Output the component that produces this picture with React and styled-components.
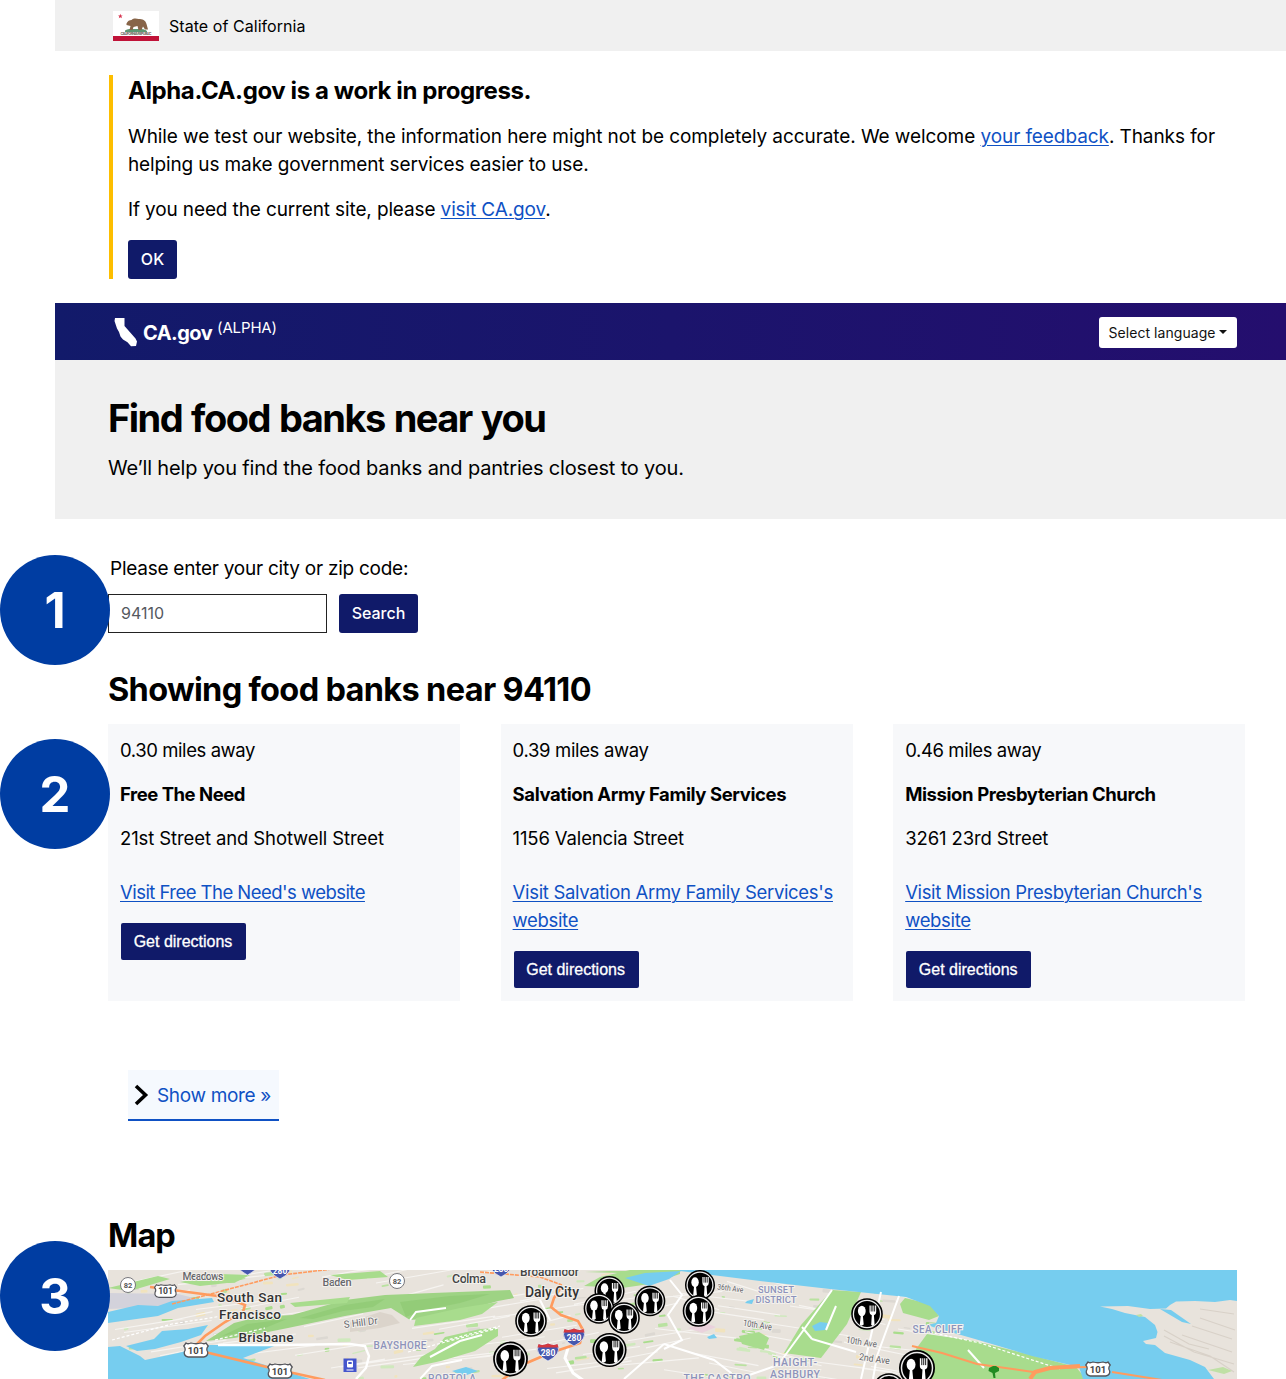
import React from "react";
import styled, { createGlobalStyle } from "styled-components";

const Global = createGlobalStyle`
  * { box-sizing: border-box; }
  body { margin: 0; background: #fff; color: #000; font-family: Inter, "Liberation Sans", sans-serif; }
  #root { overflow: hidden; height: 1379px; }
  h1, h2, h3, p { margin: 0; }
`;

const Page = styled.div`position: relative; width: 1286px;`;
const Site = styled.div`margin-left: 55px;`;
const Span = styled.span`
  letter-spacing: ${(p) => p.$ls || 0}px; word-spacing: ${(p) => p.$ws || 0}px; white-space: nowrap;
`;
const T = ({ ls, ws, children }) => <Span $ls={ls} $ws={ws}>{children}</Span>;

const StateBar = styled.div`
  display: flex; align-items: center; gap: 10px; height: 51px; padding-left: 58px;
  background: #f0f0f0; font-size: 16px; line-height: 18px;
`;
const Link = styled.a`color: #0f51c4; text-decoration: underline; text-underline-offset: 2px; text-decoration-thickness: 1px;`;
const Notice = styled.section`
  margin: 24px 0 24px 54px; height: 204px; padding-left: 15px; border-left: 4px solid #fdbe00;
  font-size: 19px; line-height: 28px;
`;
const NoticeTitle = styled.h3`font-size: 24px; line-height: 32px; margin-bottom: 16px;`;
const NoticeText = styled.p`margin-bottom: ${(p) => p.$gap}px;`;
const Button = styled.button`
  display: inline-flex; align-items: center; justify-content: center;
  width: ${(p) => p.$w}px; height: 39px; padding: 0 0 1px; border: 0; border-radius: 3px;
  background: #101a69; color: #fff; font: 500 16px Inter, sans-serif;
`;
const Directions = styled.button`
  display: flex; align-items: center; justify-content: center; width: 125px; height: 37px; margin-left: 1px;
  padding: 0 1px 0 0; border: 0; border-radius: 2px; background: #101a69; color: #fff;
  font: 400 16px "Liberation Sans", sans-serif; -webkit-text-stroke: 0.3px #fff;
`;
const Header = styled.header`
  display: flex; align-items: center; justify-content: space-between; height: 57px; padding: 0 49px 0 59px;
  background: linear-gradient(90deg, #121a6a, #240e6e);
`;
const Brand = styled.div`display: flex; align-items: center; color: #fff; font-size: 20px; font-weight: 700;`;
const BrandName = styled.span`margin: 2px 5px 0 5px;`;
const Alpha = styled.span`font-size: 15px; font-weight: 400; margin-top: -9px;`;
const Language = styled.button`
  display: flex; align-items: center; justify-content: center; gap: 4px; width: 138px; height: 31px;
  margin-top: 1px; border: 0; border-radius: 3px; padding: 0; background: #fff; color: #111; font: 400 14px Inter, sans-serif;
`;
const Caret = styled.i`border: 4px solid transparent; border-top-color: #111; border-bottom: 0;`;
const Hero = styled.section`height: 159px; padding: 34px 0 0 53px; background: #f0f0f0;`;
const Title = styled.h1`font-size: 38px; line-height: 48px;`;
const Lead = styled.p`font-size: 20px; line-height: 28px; margin-top: 12px;`;
const Main = styled.main`padding-left: 53px;`;
const Label = styled.label`display: block; padding: 36px 0 0 2px; font-size: 19px; line-height: 28px;`;
const Form = styled.div`display: flex; gap: 12px; margin-top: 11px;`;
const Field = styled.div`
  display: flex; align-items: center; width: 219px; height: 39px; border: 1px solid #222; padding: 0 0 1px 12px;
  color: #55595f; font-size: 16px;
`;
const Heading = styled.h2`font-size: 32.5px; line-height: 40px; margin-top: ${(p) => p.$top}px;`;
const Cards = styled.div`display: grid; grid-template-columns: repeat(3, 352.3px); gap: 40.3px; margin-top: 14px;`;
const Card = styled.article`height: 277px; padding: 12px; background: #f7f8fa; font-size: 18.5px; line-height: 28px;`;
const Line = styled.p`
  margin-bottom: ${(p) => p.$gap || 16}px; font-weight: ${(p) => (p.$bold ? 700 : 400)};
`;
const ShowMore = styled.div`
  display: flex; align-items: center; gap: 8px; width: 151px; height: 51px; margin: 69px 0 0 20px; padding: 1px 0 0 6px;
  background: #f5f9fe; border-bottom: 2px solid #0f51c4; color: #0f51c4; font-size: 19px;
`;
const MapBox = styled.div`width: 1129px; height: 109px; margin-top: 14px; overflow: hidden; svg { display: block; }`;
const Badge = styled.div`
  position: absolute; left: 0; top: ${(p) => p.$top}px; width: 110px; height: 110px; border-radius: 50%;
  display: flex; align-items: center; justify-content: center; background: #003da2; color: #fff;
  font: 700 49px Inter, sans-serif;
`;

const Flag = () => (
  <svg width="46" height="30" viewBox="0 0 46 30">
    <rect width="46" height="30" fill="#fff" />
    <rect y="25" width="46" height="5" fill="#c01238" />
    <path d="M7.300 2.800l.7 1.600 1.700.1-1.300 1.100.5 1.700-1.600-1-1.500 1 .5-1.700L5 4.500l1.700-.1z" fill="#d6334f" />
    <path d="M12 19.500c3-2 6-1.600 10-1.500 5 0 9-.5 12 1.900v1H12z" fill="#5d9773" />
    <path d="M13.500 12.500c1-2.500 3-3.500 5-3.500 2-2 5-1.500 7-1 4 0 7 1 8 5l1.500 5.500h-3l-2-3-1.500 3.500h-3l-1-4-4 1-1 3h-3l1-4-4-1z" fill="#876448" />
    <text x="23" y="23.800" textAnchor="middle" fontSize="3.600" fontWeight="700" fill="#6b6258" textLength="31" fontFamily="Inter">CALIFORNIA REPUBLIC</text>
  </svg>
);

const California = () => (
  <svg width="24" height="30" viewBox="0 0 24 30">
    <path d="M1 1h9.500v8L21.500 21.500l1.500 3-1 4.500-5 .2-3.500-4L9 22.500 6.500 19.500 5 15 3 11.500 1.500 7 .5 4z" fill="#fff" />
  </svg>
);

const SPOTS = [[531, 1321, 1], [510.500, 1359, 1.100], [609.500, 1291, .95], [599, 1308.500, .97], [650, 1301, .97], [624, 1318, 1], [609.500, 1350, 1.080], [700, 1285, .95], [698.500, 1311, 1], [867, 1314, 1], [889, 1389, 1], [917, 1368, 1.140]];
const Spot = ({ x, y, s }) => (
  <g transform={`translate(${x} ${y}) scale(${s})`}>
    <circle r="15.800" fill="#000" />
    <circle r="13.600" fill="#000" stroke="#ececec" strokeWidth="1.300" />
    <ellipse cx="-5.200" cy="-3" rx="3.900" ry="5.200" fill="#fff" />
    <path d="M-6.200 1h2l.9 9.500-2 1.300-1.900-1z" fill="#fff" />
    <path d="M2.500-8.500v6.500q0 2.800 2.300 3.300L4.200 11l1.700 1 1.700-1.500L6.900 1.300Q9.200.8 9.200-2v-6.500" fill="#fff" />
    <path d="M4.200-9.500v7M5.900-9.500v7M7.600-9.500v7" stroke="#000" strokeWidth=".8" />
  </g>
);

const Shield101 = ({ x, y, s = 1 }) => (
  <g transform={`translate(${x} ${y}) scale(${s})`}>
    <path d="M-10-7q2 1.500 5 0 5 1.500 10 0 3 1.500 5 0l2.200 3q-2.500 3-.5 6 .6 4-4 5H-7.700q-4.600-1-4-5 2-3-.5-6z" fill="#fff" stroke="#55555b" strokeWidth="1.300" />
    <text y="3.600" textAnchor="middle" fontSize="9.500" fontWeight="700" fill="#444">101</text>
  </g>
);
const Shield280 = ({ x, y }) => (
  <g transform={`translate(${x} ${y})`}>
    <path d="M-9-8q4 2 9-.5 5 2.500 9 .5 3 6 0 10Q6 6 0 9-6 6-9 2-12-2-9-8z" fill="#4657ae" stroke="#fff" strokeWidth=".6" />
    <path d="M-9.500-8q4.500 2 9.500-.5 5 2.500 9.500.5l1 3.500h-21z" fill="#d4393f" />
    <text y="4" textAnchor="middle" fontSize="8.500" fontWeight="700" fill="#fff">280</text>
  </g>
);
const Route82 = ({ x, y }) => (
  <g transform={`translate(${x} ${y})`}>
    <circle r="7.500" fill="#fff" stroke="#77777c" />
    <text y="2.700" textAnchor="middle" fontSize="7.500" fontWeight="700" fill="#555">82</text>
  </g>
);

let seed = 17;
const rnd = () => ((seed = (seed * 16807) % 2147483647) / 2147483647);
const SPECKS = Array.from({ length: 230 }, () => ({
  x: 108 + rnd() * 830, y: 1270 + rnd() * 109, w: 3 + rnd() * 11, h: 1.200 + rnd() * 2.800,
  c: ["#b9e2a0", "#a9dd8c", "#dcd8d2", "#f1e3bd", "#cfe9bd"][Math.floor(rnd() * 5)], a: -14 + rnd() * 14,
}));
const STREETS = Array.from({ length: 95 }, (_, i) => {
  const x = 115 + i * 9, y = 1270 + rnd() * 105;
  return `M${x} ${y}l${40 + rnd() * 50} ${i < 60 ? -14 + rnd() * 6 : 8 + rnd() * 6}`;
}).join("");

const LABELS = [
  ["Meadows", 203, 1280, 41, 10.500, "#66666b", 500], ["Baden", 337, 1286, 29, 11, "#66666b", 500],
  ["South San", 249.500, 1302, 65, 13.500, "#333", 500], ["Francisco", 250, 1318.500, 62, 13.500, "#333", 500],
  ["Brisbane", 266, 1341.500, 55, 13.500, "#333", 500], ["Colma", 469, 1283, 34, 12.500, "#444", 500],
  ["Broadmoor", 549.500, 1276, 59, 12, "#444", 500], ["Daly City", 552, 1297, 54, 14, "#333", 500],
];
const AREAS = [
  ["BAYSHORE", 400, 1349, 53, 10], ["PORTOLA", 452, 1382, 48, 10], ["SUNSET", 776, 1293, 36, 9.500],
  ["DISTRICT", 776, 1303, 41, 9.500], ["SEA CLIFF", 937.500, 1333, 50, 10], ["HAIGHT-", 795, 1366, 44, 10.500],
  ["ASHBURY", 795, 1378, 50, 10.500], ["THE CASTRO", 717, 1382, 67, 10.500],
];
const AVENUES = [["S Hill Dr", 361, 1326, 34, -7, 10], ["36th Ave", 730, 1291, 26, 7, 8], ["10th Ave", 757, 1328, 29, 9, 9], ["10th Ave", 861, 1345, 31, 9, 9], ["2nd Ave", 874, 1362, 31, 8, 9.500]];

const MapDrawing = () => (
  <svg width="1129" height="109" viewBox="108 1270 1129 109" fontFamily='Roboto, sans-serif'>
    <rect x="108" y="1270" width="1129" height="109" fill="#e8e3dc" />
    {SPECKS.map((s, i) => <rect key={i} x={s.x} y={s.y} width={s.w} height={s.h} rx="1" fill={s.c} transform={`rotate(${s.x > 680 ? -s.a : s.a} ${s.x} ${s.y})`} />)}
    <path d={STREETS} stroke="#f6f4f1" strokeWidth="1.100" fill="none" />
    <g fill="#a8dc8d">
      <path d="M206 1341l28-18 24-6 34-2 53-15 40-5 48-2 77-3 4 8-16 3-14 4-16 10-58 5-19-12-46 8-57 12-30 6-24 4z" fill="#9ed384" />
      <path d="M416 1318l44-10 38-6-16 12-22 6-30 4-16 2z" />
      <path d="M498 1328v8l-23 15-34 10-28 6 8-10 14-8 10-12 35-8z" />
      <path d="M180 1282l40-8 30 1-14 7-36 4zM108 1288l50-12 12 3-40 12z" />
      <path d="M290 1303l60-6-3 6-52 4zM330 1275l50-4 8 6-40 3z" />
      <path d="M584 1286l16-9 30-7h50v4l-30 10-28 4zM585 1272l50-2 30 0-10 4z" />
      <path d="M832 1290l29 2-14 32-26 34-37-5 17-28z" />
      <path d="M905 1298l25 6 9 12-10 4-26-7-3-9z" />
      <path d="M927 1334l48 7 56 14 45 12 10 12H912l4-30z" />
      <path d="M739 1336l20-4 10 6-5 12-22-6z" />
    </g>
    <g fill="#84c36b" opacity=".45">
      <path d="M222 1336l25-12 40-5-22 9zM300 1318l45-13 40-6-12 8-30 4-30 8zM400 1302l50-6 40-2-30 9-40 8-14 6z" />
    </g>
    <path d="M350 1322l30-10 12 3 8 8-20 5-30 4z" fill="#dbd4cb" />
    <path d="M108 1293l70 1 28 7-45 6-53 2z" fill="#d3d2db" />
    <g fill="#76cdef">
      <path d="M108 1312l30-7 20 1 14-5 40-3 2 4-36 6-20 8-50 7z" />
      <path d="M126 1346l28-7 8-8 26-2 20-4-7 10-20 7-26 7-18 2z" />
      <path d="M108 1347l12-1 20 10 5 4 33-7 32-8h67l-34 13 67 21H108z" />
      <path d="M680 1270H1237V1301L1230 1300 1215 1302 1195 1301 1176 1301.500 1170 1305 1166 1308.500 1150 1309 1128 1306 1100 1306.500 1112 1309 1125 1313 1145 1317 1155 1325 1157.500 1332 1156 1338 1143 1341 1146 1344 1155 1345 1165 1353 1190 1360 1205 1367 1214 1379H1083L1079 1367 1032 1356 975 1339 933 1327 928 1325 936 1323 939 1316 930 1306 906 1297 830 1289 760 1281 680 1271z" />
      <path d="M1160 1309l11 1 20 14-9-2z" />
      <path d="M625 1278l20-5 36-2-12 8-20 7z" />
      <path d="M812 1326l8-4 8 1-3 7-10 1zM747 1301l7-2-2 5-7-1zM707 1337l7-3 3 4-8 1zM452 1371l14-4 12 4-14 5z" />
    </g>
    <path d="M688 1328l18-5 10 4-14 6z" fill="#ead2dc" />
    <g stroke="#d8d1c8" fill="none" strokeWidth="1.200">
      <path d="M1164 1330l25 14 20 5M1192 1326l40 13M1200 1318l35 12M1170 1342l40 14 24 16M1200 1309l34 5M1164 1336l30 16 40 12M1182 1335l50 17" />
    </g>
    <path d="M1208 1370l15-3 9 4-8 3zM1136 1315l5-1 2 2-4 1z" fill="#bfe0a5" />
    <g stroke="#fff" fill="none" strokeWidth="2">
      <path d="M218 1345h62l70-1 15 2 4 10-3 12-10 11" strokeWidth="2.400" />
      <path d="M568 1348l-3 10 8 15 14 10" strokeWidth="3" />
      <path d="M832 1290l-32 45-22 30-40 14M881 1292l-20 87M899 1296l-22 60-4 23M670 1280l12 15-14 20 14 25-18 9M410 1320l6-8 30-4M430 1357l30-16 22-6M420 1379l12-13 30-6M664 1344l-40 35M664 1344l50 16 25 19M540 1300l10 20M856 1352l-44-13M826 1330l10-24M812 1339l-10-12M968 1350l16 18" />
    </g>
    <path d="M920 1330l60 13 80 26M112 1340l60-16 50-8M408 1352l90-24M440 1342l60-16M215 1340l50-12" stroke="#fff" strokeWidth="1.200" strokeDasharray="3 2" fill="none" />
    <g stroke="#ff9b5e" fill="none">
      <path d="M195 1346l10-10 20-14 18-10 2-7-20-8-45-6-30-4M205 1352l70 17 50 11" strokeWidth="2.600" />
      <path d="M172 1304l50-13 60-16 50-6M480 1272l60 5 22 8" strokeWidth="1.600" strokeDasharray="4 1" />
      <path d="M562 1286l-8 12-3 9 10 8 17 6 5 9-3 13-30 10-28 12-20 15" strokeWidth="2.600" />
      <path d="M912 1346l30 7 35 11 56 8 15-4 40-1M1112 1372l50 8" strokeWidth="2" />
      <path d="M1030 1379l5-7 15-4 30-2" strokeWidth="4" />
    </g>
    <Shield280 x={247.500} y={1266} /><Shield280 x={280} y={1270} /><Shield280 x={501} y={1268} />
    <Shield280 x={574} y={1337} /><Shield280 x={548} y={1352} />
    <Route82 x={128} y={1285} /><Route82 x={397} y={1281} />
    <Shield101 x={165.500} y={1291} s={0.9} /><Shield101 x={196} y={1350} /><Shield101 x={280} y={1371} /><Shield101 x={1098} y={1369} />
    <g paintOrder="stroke" stroke="#f3f1ed" strokeWidth="2" textAnchor="middle">
      {LABELS.map(([t, x, y, w, s, c, fw]) => <text key={t} x={x} y={y} textLength={w} fontSize={s} fill={c} fontWeight={fw}>{t}</text>)}
      {AREAS.map(([t, x, y, w, s]) => <text key={t} x={x} y={y} textLength={w} fontSize={s} fill="#8d93bb" fontWeight="500">{t}</text>)}
      {AVENUES.map(([t, x, y, w, a, s], i) => <text key={i} x={x} y={y} textLength={w} lengthAdjust="spacingAndGlyphs" fontSize={s} fill="#66666b" transform={`rotate(${a} ${x} ${y})`}>{t}</text>)}
    </g>
    <rect x="343.500" y="1358.500" width="13" height="13.500" fill="#4455cc" />
    <rect x="347" y="1360.500" width="6" height="7" rx="1" fill="#fff" /><rect x="348.300" y="1362" width="3.400" height="2" fill="#4455cc" />
    <path d="M346.500 1370h7" stroke="#fff" />
    <path d="M993.500 1378h2l-.5-5 4-2v-3l-3-2-3 0-4 2-.5 3 4 2z" fill="#228b22" />
    {SPOTS.map(([x, y, s], i) => <Spot key={i} x={x} y={y} s={s} />)}
  </svg>
);

const BANKS = [
  {
    miles: ["0.30 miles away", -0.42], name: ["Free The Need", -0.47], street: ["21st Street and Shotwell Street", -0.11],
    link: [["Visit Free The Need's website", -0.54]],
  },
  {
    miles: ["0.39 miles away", -0.34], name: ["Salvation Army Family Services", -0.4], street: ["1156 Valencia Street", -0.14],
    link: [["Visit Salvation Army Family Services's", -0.32], ["website", -0.33]],
  },
  {
    miles: ["0.46 miles away", -0.4], name: ["Mission Presbyterian Church", -0.41], street: ["3261 23rd Street", -0.12],
    link: [["Visit Mission Presbyterian Church's", -0.37], ["website", -0.33]],
  },
];

export default function App() {
  return (
    <Page>
      <Global />
      <Site>
        <StateBar><Flag /><T ls={0.05}>State of California</T></StateBar>
        <Notice>
          <NoticeTitle><T ls={-0.41}>Alpha.CA.gov is a work in progress.</T></NoticeTitle>
          <NoticeText $gap={17}>
            <T ls={-0.08}>While we test our website, the information here might not be completely accurate. We welcome <Link>your feedback</Link>. Thanks for</T><br />
            <T ls={-0.125}>helping us make government services easier to use.</T>
          </NoticeText>
          <NoticeText $gap={16}><T ls={-0.13}>If you need the current site, please <Link>visit CA.gov</Link>.</T></NoticeText>
          <Button $w={49}><T>OK</T></Button>
        </Notice>
        <Header>
          <Brand><California /><BrandName><T ls={-0.55}>CA.gov</T></BrandName><Alpha><T ls={-0.15}>(ALPHA)</T></Alpha></Brand>
          <Language><T ls={0.05}>Select language</T><Caret /></Language>
        </Header>
        <Hero>
          <Title><T ls={-1.5} ws={1.4}>Find food banks near you</T></Title>
          <Lead><T ls={-0.175}>We’ll help you find the food banks and pantries closest to you.</T></Lead>
        </Hero>
        <Main>
          <Label><T ls={-0.25}>Please enter your city or zip code:</T></Label>
          <Form><Field><T>94110</T></Field><Button $w={79}><T>Search</T></Button></Form>
          <Heading $top={37}><T ls={-0.67}>Showing food banks near 94110</T></Heading>
          <Cards>
            {BANKS.map((b) => (
              <Card key={b.name[0]}>
                <Line><T ls={b.miles[1]}>{b.miles[0]}</T></Line>
                <Line $bold><T ls={b.name[1]}>{b.name[0]}</T></Line>
                <Line $gap={26}><T ls={b.street[1]}>{b.street[0]}</T></Line>
                <Line $gap={17}>
                  <Link>{b.link.map(([l, ls], i) => <React.Fragment key={l}>{i > 0 && <br />}<T ls={ls}>{l}</T></React.Fragment>)}</Link>
                </Line>
                <Directions>Get directions</Directions>
              </Card>
            ))}
          </Cards>
          <ShowMore>
            <svg width="15" height="22" viewBox="0 0 15 22"><path d="M2 2l9.500 9L2 20" fill="none" stroke="#000" strokeWidth="3.600" /></svg>
            <T ls={-0.33}>Show more »</T>
          </ShowMore>
          <Heading $top={95}><T ls={-0.9}>Map</T></Heading>
          <MapBox><MapDrawing /></MapBox>
        </Main>
      </Site>
      <Badge $top={555}>1</Badge>
      <Badge $top={739}>2</Badge>
      <Badge $top={1241}>3</Badge>
    </Page>
  );
}
